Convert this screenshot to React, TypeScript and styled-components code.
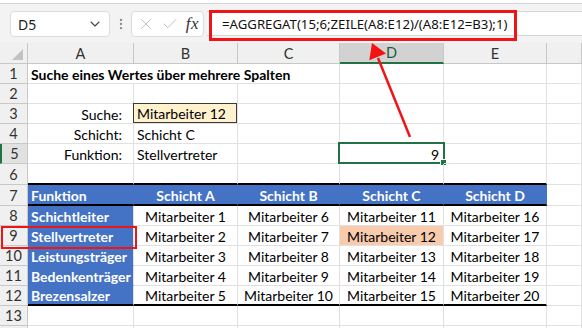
import styled, { createGlobalStyle } from "styled-components";
import { ChevronDown, EllipsisVertical, X, Check } from "lucide-react";

const GRID = "#e1e1e1";
const HEAD_LINE = "#c8c8c8";
const BLUE = "#4472c4";
const GREEN = "#217346";
const RED = "#f01414";

const GlobalStyle = createGlobalStyle`
  body {
    margin: 0;
    background: #ffffff;
    overflow: hidden;
  }
`;

const Frame = styled.div`
  position: relative;
  width: 582px;
  height: 328px;
  overflow: hidden;
  background: #ffffff;
  font-family: Lato, "Liberation Sans", sans-serif;
`;

const RibbonEdge = styled.div`
  height: 3px;
  background: #ffffff;
  border-bottom: 1px solid #d6d6d6;
`;

const FormulaBar = styled.div`
  height: 39px;
  box-sizing: border-box;
  background: #f3f3f3;
  display: flex;
  align-items: flex-start;
  padding: 7px 0 0 10px;
  font-family: "Noto Sans", "Open Sans", sans-serif;
`;

const NameBox = styled.div`
  width: 100px;
  height: 26px;
  box-sizing: border-box;
  background: #ffffff;
  border: 1px solid #dcdcdc;
  border-radius: 4px;
  display: flex;
  align-items: center;
  justify-content: space-between;
  padding: 0 6px 0 7px;
  font-size: 14px;
  color: #222;
`;

const Dots = styled.div`
  width: 21px;
  height: 26px;
  display: flex;
  align-items: center;
  justify-content: center;
  color: #8a8a8a;
`;

const FxBox = styled.div`
  width: 73px;
  height: 26px;
  box-sizing: border-box;
  background: #ffffff;
  border: 1px solid #dcdcdc;
  border-radius: 4px;
  display: flex;
  align-items: center;
  justify-content: space-between;
  padding: 0 4px 0 5px;
  color: #b4b4b4;
`;

const Fx = styled.span`
  font-family: "Liberation Serif", serif;
  font-style: italic;
  font-size: 17px;
  color: #333;
  letter-spacing: 0.5px;
`;

const FormulaInput = styled.div`
  position: relative;
  flex: 1;
  margin-left: 3px;
  height: 25px;
  box-sizing: border-box;
  background: #ffffff;
  border-top: 1px solid #d6d6d6;
  border-bottom: 1px solid #d6d6d6;
  display: flex;
  align-items: center;
  padding-left: 15px;
  font-size: 13.2px;
  color: #111;
  white-space: nowrap;
`;

const CalloutBox = styled.div`
  position: absolute;
  left: 2px;
  top: -2px;
  width: 308px;
  height: 31px;
  box-sizing: border-box;
  border: 3px solid ${RED};
  pointer-events: none;
`;

const Sheet = styled.div`
  display: grid;
  grid-template-columns: 28px 106px 104px 102px 104px 103px 1fr;
  grid-template-rows: 21px repeat(5, 20px) 21px 21px repeat(5, 20px) 20px 20px;
  font-size: 14px;
  color: #000;
`;

const Corner = styled.div`
  position: relative;
  background: #f0f0f0;
  border-right: 1px solid ${HEAD_LINE};
  border-bottom: 1px solid ${HEAD_LINE};
  &::after {
    content: "";
    position: absolute;
    right: 4px;
    bottom: 3px;
    border-left: 11px solid transparent;
    border-bottom: 11px solid #c2c2c2;
  }
`;

const ColHead = styled.div<{ $active?: boolean }>`
  box-sizing: border-box;
  display: flex;
  align-items: center;
  justify-content: center;
  background: ${(p) => (p.$active ? "#d2d2d2" : "#f0f0f0")};
  border-right: 1px solid ${HEAD_LINE};
  border-bottom: ${(p) => (p.$active ? `2px solid ${GREEN}` : `1px solid ${HEAD_LINE}`)};
  color: ${(p) => (p.$active ? "#1d5c39" : "#333")};
  font-size: 14.5px;
`;

const RowHead = styled.div<{ $active?: boolean }>`
  position: relative;
  box-sizing: border-box;
  display: flex;
  align-items: center;
  justify-content: center;
  background: ${(p) => (p.$active ? "#e1e1e1" : "#f0f0f0")};
  border-left: ${(p) => (p.$active ? `2px solid ${GREEN}` : "none")};
  border-right: 1px solid ${HEAD_LINE};
  border-bottom: 1px solid ${HEAD_LINE};
  color: #333;
  font-size: 14.5px;
`;

type CellProps = {
  $align?: "left" | "center" | "right";
  $bold?: boolean;
  $bg?: string;
  $color?: string;
  $bottom?: string;
  $right?: string;
  $span?: number;
  $padRight?: number;
};

const Cell = styled.div<CellProps>`
  position: relative;
  box-sizing: border-box;
  display: flex;
  align-items: center;
  justify-content: ${(p) =>
    p.$align === "center" ? "center" : p.$align === "right" ? "flex-end" : "flex-start"};
  padding: 1px ${(p) => p.$padRight ?? 3}px 0 3px;
  grid-column: span ${(p) => p.$span ?? 1};
  white-space: nowrap;
  font-weight: ${(p) => (p.$bold ? 700 : 400)};
  background: ${(p) => p.$bg ?? "transparent"};
  color: ${(p) => p.$color ?? "#000"};
  border-right: 1px solid ${(p) => p.$right ?? GRID};
  border-bottom: ${(p) => p.$bottom ?? `1px solid ${GRID}`};
`;

const SearchCell = styled(Cell)`
  background: #fff2cc;
  box-shadow: inset 0 0 0 1px #3a3a3a;
  margin: -1px 0 0 -1px;
  padding-left: 4px;
`;

const Selection = styled.div`
  position: absolute;
  left: -2px;
  top: -2px;
  right: -2px;
  bottom: -1px;
  border: 2px solid ${GREEN};
  pointer-events: none;
  &::after {
    content: "";
    position: absolute;
    right: -4px;
    bottom: -4px;
    width: 5px;
    height: 5px;
    background: ${GREEN};
    border: 1px solid #fff;
  }
`;

const RowMark = styled.div`
  position: absolute;
  left: 1px;
  top: 0;
  width: 136px;
  height: 23px;
  box-sizing: border-box;
  border: 2px solid ${RED};
  pointer-events: none;
  z-index: 2;
`;

const Arrow = styled.svg`
  position: absolute;
  left: 0;
  top: 0;
  pointer-events: none;
`;

const columns = ["A", "B", "C", "D", "E", ""];
const thick = "2px solid #000";

const roles = ["Schichtleiter", "Stellvertreter", "Leistungsträger", "Bedenkenträger", "Brezensalzer"];

const App = () => {
  const emptyRow = (n: number | null, bottom?: string) => (
    <>
      <RowHead>{n}</RowHead>
      {columns.map((c, i) => (
        <Cell key={c + i} $bottom={bottom && i < 5 ? bottom : undefined} />
      ))}
    </>
  );

  return (
    <Frame>
      <GlobalStyle />
      <RibbonEdge />
      <FormulaBar>
        <NameBox>
          <span>D5</span>
          <ChevronDown size={16} strokeWidth={1.6} color="#444" />
        </NameBox>
        <Dots>
          <EllipsisVertical size={14} strokeWidth={2} />
        </Dots>
        <FxBox>
          <X size={18} strokeWidth={1.1} />
          <Check size={18} strokeWidth={1.1} />
          <Fx>fx</Fx>
        </FxBox>
        <FormulaInput>
          =AGGREGAT(15;6;ZEILE(A8:E12)/(A8:E12=B3);1)
          <CalloutBox />
        </FormulaInput>
      </FormulaBar>

      <Sheet>
        <Corner />
        {columns.map((c, i) => (
          <ColHead key={c + i} $active={c === "D"}>
            {c}
          </ColHead>
        ))}

        <RowHead>1</RowHead>
        <Cell $bold $span={3}>
          Suche eines Wertes über mehrere Spalten
        </Cell>
        <Cell />
        <Cell />
        <Cell />

        {emptyRow(2)}

        <RowHead>3</RowHead>
        <Cell $align="right" $padRight={11}>Suche:</Cell>
        <SearchCell>Mitarbeiter 12</SearchCell>
        <Cell />
        <Cell />
        <Cell />
        <Cell />

        <RowHead>4</RowHead>
        <Cell $align="right" $padRight={11}>Schicht:</Cell>
        <Cell>Schicht C</Cell>
        <Cell />
        <Cell />
        <Cell />
        <Cell />

        <RowHead $active>5</RowHead>
        <Cell $align="right" $padRight={11}>Funktion:</Cell>
        <Cell>Stellvertreter</Cell>
        <Cell />
        <Cell $align="right" $padRight={4}>
          9
          <Selection />
        </Cell>
        <Cell />
        <Cell />

        {emptyRow(6, thick)}

        <RowHead>7</RowHead>
        <Cell $bold $bg={BLUE} $color="#fff" $right={BLUE} $bottom={thick}>
          Funktion
        </Cell>
        {["Schicht A", "Schicht B", "Schicht C", "Schicht D"].map((s) => (
          <Cell key={s} $bold $align="center" $bg={BLUE} $color="#fff" $right={BLUE} $bottom={thick}>
            {s}
          </Cell>
        ))}
        <Cell />

        {roles.map((role, r) => {
          const last = r === roles.length - 1;
          return (
            <>
              <RowHead key={"h" + r}>
                {r + 8}
                {r === 1 && <RowMark />}
              </RowHead>
              <Cell key={"a" + r} $bold $bg={BLUE} $color="#fff" $bottom={last ? thick : `1px solid ${BLUE}`}>
                {role}
              </Cell>
              {[0, 1, 2, 3].map((s) => {
                const n = s * 5 + r + 1;
                return (
                  <Cell
                    key={"c" + r + s}
                    $align="center"
                    $bg={n === 12 ? "#f8cbad" : undefined}
                    $bottom={last ? thick : undefined}
                  >
                    Mitarbeiter {n}
                  </Cell>
                );
              })}
              <Cell key={"f" + r} />
            </>
          );
        })}

        {emptyRow(13)}
        {emptyRow(null)}
      </Sheet>

      <Arrow width="582" height="328" viewBox="0 0 582 328">
        <line x1="410" y1="137" x2="378" y2="58" stroke={RED} strokeWidth="2.5" />
        <polygon points="372,43 386,53.5 369.3,60.3" fill={RED} />
      </Arrow>
    </Frame>
  );
};

export default App;
